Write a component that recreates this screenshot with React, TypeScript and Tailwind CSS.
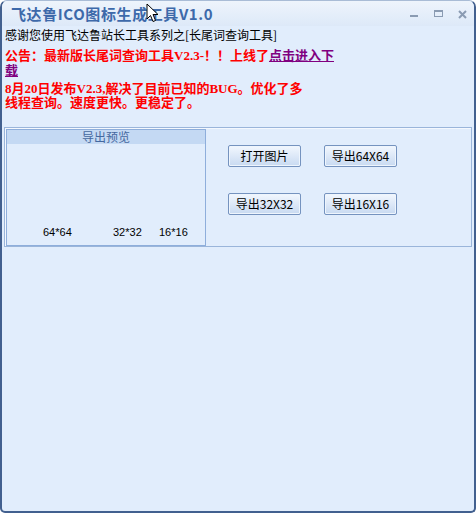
import React from "react";

const cjk = { fontFamily: '"Noto Sans CJK SC", "Liberation Sans", sans-serif' };
const serifMix = { fontFamily: '"Liberation Serif", "Noto Sans CJK SC", serif' };

function Btn({ children }: { children: React.ReactNode }) {
  return (
    <div
      className="w-[73px] h-[22px] flex items-center justify-center border border-[#7593bf] rounded-[2px] bg-gradient-to-b from-[#f2f7fe] to-[#c8daf1] text-[12px] text-black leading-none shadow-[inset_0_0_0_1px_#eef5fd]"
      style={cjk}
    >
      {children}
    </div>
  );
}

export default function App() {
  return (
    <div className="w-[476px] h-[513px] relative bg-[#e1edfc] border-x-2 border-b-2 border-[#42608f] border-t border-t-[#a9bcd6] rounded-t-[7px] rounded-b-[5px] overflow-hidden flex flex-col">
      {/* title bar */}
      <div className="h-[25px] shrink-0 flex items-center justify-between bg-gradient-to-b from-[#eef4fc] to-[#dde9f8] pl-[9px] pr-[6px]">
        <div className="text-[15px] font-bold text-[#3d69aa] leading-none tracking-[0.6px]" style={cjk}>
          飞达鲁ICO图标生成工具V1.0
        </div>
        <div className="flex items-center gap-[15px] mt-[2px]">
          <svg width="9" height="9" viewBox="0 0 9 9">
            <rect x="0" y="5" width="8" height="2" fill="#8a9bb2" />
          </svg>
          <svg width="9" height="9" viewBox="0 0 9 9">
            <rect x="0.5" y="0.5" width="8" height="6" fill="none" stroke="#8a9bb2" />
            <rect x="0" y="0" width="9" height="2" fill="#8a9bb2" />
          </svg>
          <svg width="10" height="9" viewBox="0 0 10 9">
            <path d="M1 1 L8 8 M8 1 L1 8" stroke="#8a9bb2" strokeWidth="2" />
          </svg>
        </div>
      </div>

      {/* content */}
      <div className="px-[3px] pt-[2px]">
        <div className="text-[12px] leading-[14px] text-black" style={cjk}>
          感谢您使用飞达鲁站长工具系列之[长尾词查询工具]
        </div>
        <div className="mt-[6px] text-[13px] leading-[15px] font-bold text-[#ff0000]" style={serifMix}>
          公告：最新版长尾词查询工具V2.3-！！上线了
          <span className="text-[#800080] underline">
            点击进入下
            <br />载
          </span>
        </div>
        <div className="mt-[4px] text-[13px] leading-[14px] font-bold text-[#ff0000]" style={serifMix}>
          8月20日发布V2.3,解决了目前已知的BUG。优化了多
          <br />
          线程查询。速度更快。更稳定了。
        </div>
      </div>

      {/* group box */}
      <div className="mt-[17px] ml-[2px] w-[468px] h-[120px] border border-[#9ab5da] shadow-[inset_1px_1px_0_#f4f8fe] p-[1px] flex">
        <div className="w-[200px] h-[117px] border border-[#8eaedb] flex flex-col">
          <div className="h-[14px] bg-[#c4d9f3] text-[12px] leading-[14px] text-[#44689f] text-center" style={cjk}>
            导出预览
          </div>
          <div className="flex-1" />
          <div
            className="flex pl-[36px] pb-[6px] text-[11px] leading-[14px] text-black"
            style={{ fontFamily: '"Liberation Sans", sans-serif' }}
          >
            <span className="w-[70px]">64*64</span>
            <span className="w-[46px]">32*32</span>
            <span>16*16</span>
          </div>
        </div>
        <div className="ml-[22px] mt-[16px] grid grid-cols-[73px_73px] gap-x-[23px] gap-y-[26px] content-start">
          <Btn>打开图片</Btn>
          <Btn>导出64X64</Btn>
          <Btn>导出32X32</Btn>
          <Btn>导出16X16</Btn>
        </div>
      </div>

      {/* mouse cursor overlay */}
      <svg className="absolute left-[144px] top-[2px]" width="13" height="21" viewBox="0 0 13 21">
        <path
          d="M1 1 L1 16 L4.5 12.5 L7 18.5 L9.5 17.5 L7 11.5 L12 11.5 Z"
          fill="#ffffff"
          stroke="#000000"
          strokeWidth="1"
          strokeLinejoin="miter"
        />
      </svg>
    </div>
  );
}
